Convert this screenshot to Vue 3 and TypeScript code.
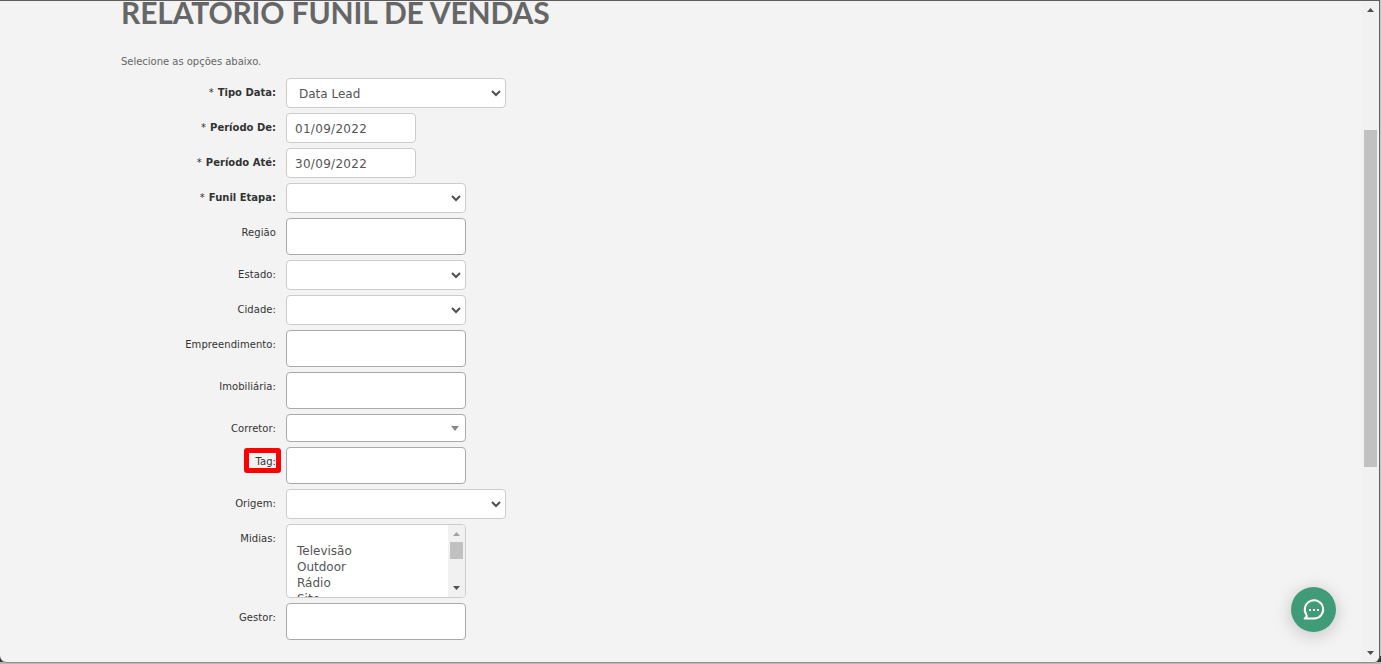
<script setup lang="ts">
import { ref } from 'vue'

interface Field {
  label: string
  kind: 'select' | 'input' | 'multi' | 'combo' | 'list'
  required?: boolean
  wide?: boolean
  marked?: boolean
  value?: string
}

const fields = ref<Field[]>([
  { label: 'Tipo Data:', kind: 'select', required: true, wide: true, value: 'Data Lead' },
  { label: 'Período De:', kind: 'input', required: true, value: '01/09/2022' },
  { label: 'Período Até:', kind: 'input', required: true, value: '30/09/2022' },
  { label: 'Funil Etapa:', kind: 'select', required: true },
  { label: 'Região', kind: 'multi' },
  { label: 'Estado:', kind: 'select' },
  { label: 'Cidade:', kind: 'select' },
  { label: 'Empreendimento:', kind: 'multi' },
  { label: 'Imobiliária:', kind: 'multi' },
  { label: 'Corretor:', kind: 'combo' },
  { label: 'Tag:', kind: 'multi', marked: true },
  { label: 'Origem:', kind: 'select', wide: true },
  { label: 'Midias:', kind: 'list' },
  { label: 'Gestor:', kind: 'multi' }
])
const medias = ['', 'Televisão', 'Outdoor', 'Rádio', 'Site']
</script>
<template>
  <div class="frame">
    <div class="window">
      <main class="content">
        <h1>RELATÓRIO FUNIL DE VENDAS</h1>
        <p class="intro">Selecione as opções abaixo.</p>
        <form class="form">
          <div v-for="field in fields" :key="field.label" class="row">
            <label :class="{ required: field.required }">
              <span v-if="field.required" class="star">*</span>
              <span class="name">{{ field.label }}<i v-if="field.marked" class="mark"></i></span>
            </label>
            <div class="control" :class="[field.kind, { wide: field.wide }]">
              <template v-if="field.kind === 'list'">
                <ul>
                  <li v-for="media in medias" :key="media">{{ media }}</li>
                </ul>
                <div class="list-bar">
                  <svg width="7" height="4" viewBox="0 0 7 4"><path d="M0 4L3.5 0L7 4Z" fill="#a3a3a3" /></svg>
                  <div class="list-thumb"></div>
                  <svg class="down" width="7" height="4" viewBox="0 0 7 4"><path d="M0 0H7L3.5 4Z" fill="#505050" /></svg>
                </div>
              </template>
              <template v-else>
                <span class="value">{{ field.value }}</span>
                <svg v-if="field.kind === 'select'" width="10" height="7" viewBox="0 0 10 7">
                  <path d="M1 1L5 5L9 1" fill="none" stroke="#505050" stroke-width="2" />
                </svg>
                <svg v-if="field.kind === 'combo'" width="8" height="5" viewBox="0 0 8 5">
                  <path d="M0 0H8L4 5Z" fill="#888" />
                </svg>
              </template>
            </div>
          </div>
        </form>
      </main>
      <div class="scrollbar">
        <svg width="7" height="4" viewBox="0 0 7 4"><path d="M0 4L3.5 0L7 4Z" fill="#505050" /></svg>
        <div class="thumb"></div>
        <svg class="down" width="7" height="4" viewBox="0 0 7 4"><path d="M0 0H7L3.5 4Z" fill="#505050" /></svg>
      </div>
      <button class="chat" type="button">
        <svg width="23" height="23" viewBox="0 0 23 23">
          <path
            d="M4.1 16.2A9.2 9.2 0 1 1 12.2 20.6H2.6L4.9 18.3Z"
            fill="none"
            stroke="#fff"
            stroke-width="2"
            stroke-linejoin="round"
          />
          <path d="M7 11h2v2h-2zM11 11h2v2h-2zM15 11h2v2h-2z" fill="#fff" />
        </svg>
      </button>
    </div>
  </div>
</template>
<style>
body {
  margin: 0;
  overflow: hidden;
}
</style>
<style scoped>
* {
  box-sizing: border-box;
}
.frame {
  width: 1381px;
  height: 664px;
  padding-right: 1px;
  background: linear-gradient(#c4c4c4 0 656px, #333 656px 662px, #b7b7b7 662px);
  font-family: Verdana, 'DejaVu Sans', sans-serif;
}
.window {
  position: relative;
  display: flex;
  height: 663px;
  border-top: 1px solid #5f5b5f;
  border-right: 1px solid #656565;
  border-bottom: 1px solid #909090;
  border-radius: 0 0 7px 7px;
  background: #f3f3f3;
  overflow: hidden;
}
.content {
  flex: 1;
  padding-left: 121px;
}
h1 {
  height: 36px;
  margin: -7px 0 0;
  font: 700 30px/36px Lato, sans-serif;
  letter-spacing: -0.15px;
  color: #666;
  white-space: nowrap;
}
.intro {
  height: 14px;
  margin: 25px 0 9px;
  font-size: 10px;
  line-height: 14px;
  letter-spacing: -0.02px;
  color: #666;
}
.form {
  display: flex;
  flex-direction: column;
  gap: 5px;
}
.row {
  display: flex;
  gap: 10px;
}
label {
  width: 155px;
  padding-top: 8px;
  font-size: 10px;
  line-height: 14px;
  letter-spacing: 0.07px;
  color: #333;
  text-align: right;
  white-space: nowrap;
}
.required {
  letter-spacing: 0;
}
.required .name {
  font-weight: 700;
}
.star {
  margin-right: 4px;
}
.name {
  position: relative;
}
.mark {
  position: absolute;
  top: -8px;
  right: -5px;
  width: 37px;
  height: 25px;
  border: 5px solid #f00;
  border-radius: 3px;
}
.control {
  display: flex;
  align-items: center;
  justify-content: space-between;
  width: 180px;
  height: 30px;
  border: 1px solid #ccc;
  border-radius: 4px;
  background: #fff;
  font-size: 12px;
  color: #555;
}
.value {
  padding-top: 1px;
}
.select {
  padding: 0 4px 0 12px;
}
.input {
  width: 130px;
  padding-left: 8px;
  letter-spacing: 0.3px;
}
.wide {
  width: 220px;
}
.multi {
  height: 37px;
  border-color: #aaa;
}
.combo {
  height: 28px;
  padding-right: 6px;
  border-color: #aaa;
}
.list {
  height: 74px;
  align-items: stretch;
  overflow: hidden;
}
ul {
  margin: 0;
  padding: 2px 0 0 10px;
  list-style: none;
}
li {
  height: 16px;
  line-height: 16px;
}
.list-bar,
.scrollbar {
  display: flex;
  flex-direction: column;
  align-items: center;
  width: 17px;
  padding-top: 7px;
  background: #f1f1f1;
}
.list-thumb {
  width: 13px;
  height: 17px;
  margin-top: 6px;
  background: #c1c1c1;
}
.down {
  margin-top: auto;
  margin-bottom: 7px;
}
.thumb {
  width: 13px;
  height: 337px;
  margin-top: 118px;
  background: #c1c1c1;
}
.chat {
  position: absolute;
  right: 43px;
  bottom: 30px;
  display: flex;
  align-items: center;
  justify-content: center;
  width: 45px;
  height: 45px;
  padding: 0;
  border: 0;
  border-radius: 50%;
  background: #409b78;
  box-shadow: 0 3px 18px rgba(0, 0, 0, 0.2);
}
</style>
